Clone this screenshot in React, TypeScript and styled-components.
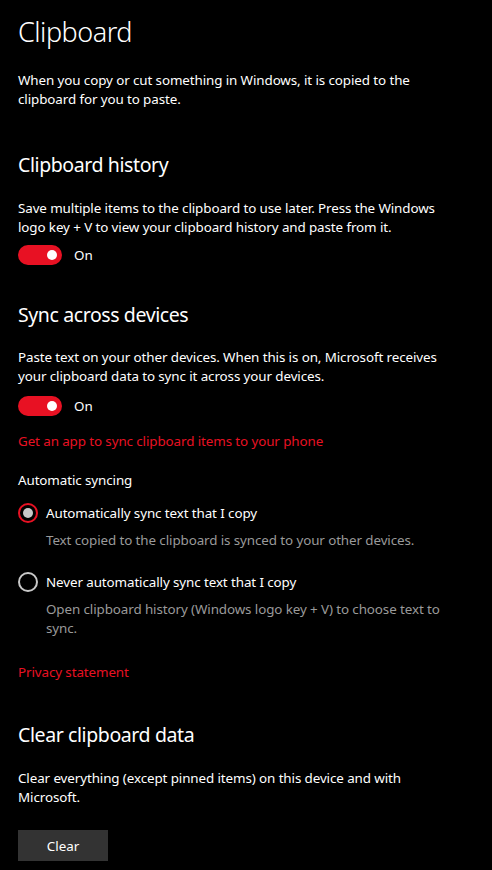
import React from "react";
import styled, { createGlobalStyle } from "styled-components";

const Global = createGlobalStyle`
  html, body { margin: 0; padding: 0; background: #000; }
  body { font-family: "Noto Sans", "Open Sans", sans-serif; color: #fff; }
  * { box-sizing: border-box; }
`;

const Page = styled.div`
  width: 492px;
  min-height: 870px;
  background: #000;
  padding: 12px 18px 0 18px;
  display: flex;
  flex-direction: column;
`;

const Title = styled.h1`
  margin: 0;
  font-size: 27px;
  font-weight: 300;
  letter-spacing: -0.5px;
  line-height: 40px;
  color: #fff;
`;

const Heading = styled.h2<{ $gap: number }>`
  margin: ${(p) => p.$gap}px 0 0 0;
  font-size: 19.5px;
  font-weight: 400;
  letter-spacing: -0.4px;
  line-height: 28px;
  color: #fff;
`;

const Text = styled.p<{ $gap: number; $muted?: boolean; $indent?: boolean }>`
  margin: ${(p) => p.$gap}px 0 0 ${(p) => (p.$indent ? 28 : 0)}px;
  font-size: 13.4px;
  letter-spacing: -0.1px;
  line-height: 19px;
  color: ${(p) => (p.$muted ? "#9a9a9a" : "#fff")};
`;

const Link = styled.a<{ $gap: number }>`
  display: block;
  margin-top: ${(p) => p.$gap}px;
  font-size: 13.4px;
  letter-spacing: -0.1px;
  line-height: 19px;
  color: #e81123;
  text-decoration: none;
`;

const ToggleRow = styled.div<{ $gap: number }>`
  margin-top: ${(p) => p.$gap}px;
  display: flex;
  align-items: center;
  gap: 12px;
  height: 20px;
`;

const Track = styled.div`
  width: 44px;
  height: 20px;
  border-radius: 10px;
  background: #e81123;
  display: flex;
  align-items: center;
  justify-content: flex-end;
  padding-right: 5px;
`;

const Knob = styled.div`
  width: 10px;
  height: 10px;
  border-radius: 50%;
  background: #fff;
`;

const ToggleLabel = styled.span`
  font-size: 13.4px;
  line-height: 20px;
  color: #fff;
`;

const RadioRow = styled.label<{ $gap: number }>`
  margin-top: ${(p) => p.$gap}px;
  display: flex;
  align-items: center;
  gap: 8px;
  height: 20px;
  font-size: 13.4px;
  letter-spacing: -0.1px;
  color: #fff;
`;

const RadioCircle = styled.span<{ $checked?: boolean }>`
  width: 20px;
  height: 20px;
  border-radius: 50%;
  border: 2px solid ${(p) => (p.$checked ? "#e81123" : "#c8c8c8")};
  display: flex;
  align-items: center;
  justify-content: center;
  flex: none;
`;

const RadioDot = styled.span`
  width: 10px;
  height: 10px;
  border-radius: 50%;
  background: #c8c8c8;
`;

const Button = styled.button`
  margin-top: 23px;
  width: 90px;
  height: 31px;
  border: none;
  background: #333333;
  color: #fff;
  font-family: inherit;
  font-size: 13.4px;
  align-self: flex-start;
  padding: 0;
`;

function Toggle({ gap }: { gap: number }) {
  return (
    <ToggleRow $gap={gap}>
      <Track>
        <Knob />
      </Track>
      <ToggleLabel>On</ToggleLabel>
    </ToggleRow>
  );
}

export default function App() {
  return (
    <>
      <Global />
      <Page>
        <Title>Clipboard</Title>
        <Text $gap={19}>
          When you copy or cut something in Windows, it is copied to the
          <br />
          clipboard for you to paste.
        </Text>

        <Heading $gap={42}>Clipboard history</Heading>
        <Text $gap={20}>
          Save multiple items to the clipboard to use later. Press the Windows
          <br />
          logo key + V to view your clipboard history and paste from it.
        </Text>
        <Toggle gap={8} />

        <Heading $gap={36}>Sync across devices</Heading>
        <Text $gap={19}>
          Paste text on your other devices. When this is on, Microsoft receives
          <br />
          your clipboard data to sync it across your devices.
        </Text>
        <Toggle gap={10} />
        <Link $gap={16}>Get an app to sync clipboard items to your phone</Link>

        <Text $gap={20}>Automatic syncing</Text>
        <RadioRow $gap={13}>
          <RadioCircle $checked>
            <RadioDot />
          </RadioCircle>
          Automatically sync text that I copy
        </RadioRow>
        <Text $gap={8} $muted $indent>
          Text copied to the clipboard is synced to your other devices.
        </Text>
        <RadioRow $gap={22}>
          <RadioCircle />
          Never automatically sync text that I copy
        </RadioRow>
        <Text $gap={8} $muted $indent>
          Open clipboard history (Windows logo key + V) to choose text to
          <br />
          sync.
        </Text>
        <Link $gap={25}>Privacy statement</Link>

        <Heading $gap={39}>Clear clipboard data</Heading>
        <Text $gap={20}>
          Clear everything (except pinned items) on this device and with
          <br />
          Microsoft.
        </Text>
        <Button>Clear</Button>
      </Page>
    </>
  );
}
